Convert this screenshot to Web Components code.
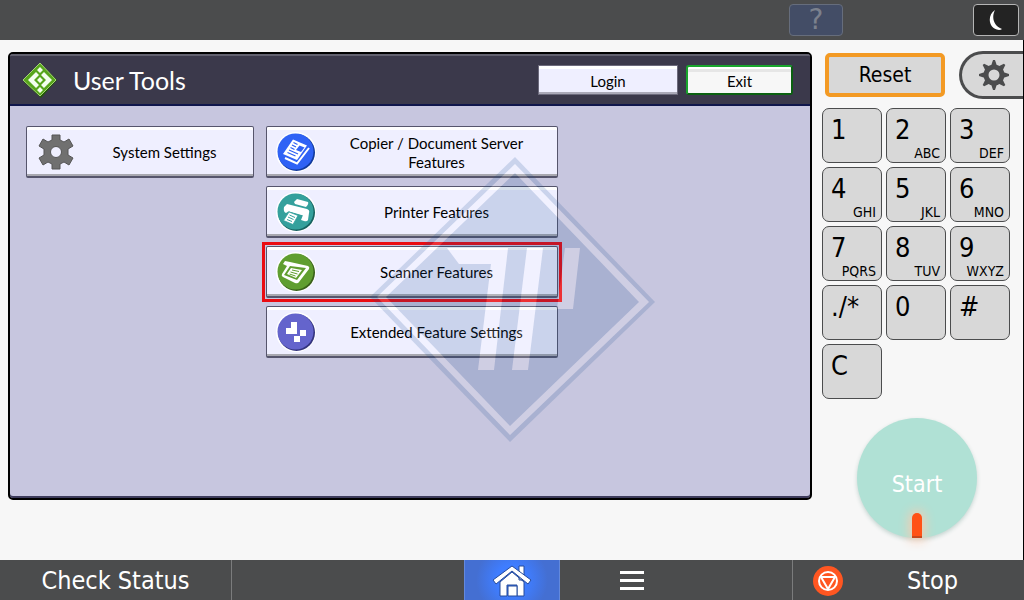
<!DOCTYPE html>
<html lang="en">
<head>
<meta charset="utf-8">
<title>User Tools</title>
<style>
  body {
    margin: 0;
    background: #f7f7f7;
    font-family: "DejaVu Sans Condensed", "DejaVu Sans", sans-serif;
  }
</style>
</head>
<body>
<operation-panel></operation-panel>

<template id="icon-gear">
  <svg viewBox="0 0 36 36" width="36" height="36">
    <path fill="#707070" fill-rule="evenodd" stroke="#555" stroke-width="1" d="M14 1h8v5l4 2 5-3 4 7-5 3v6l5 3-4 7-5-3-4 2v5h-8v-5l-4-2-5 3-4-7 5-3v-6l-5-3 4-7 5 3 4-2zM18 12.500a5.500 5.500 0 1 0 0 11a5.500 5.500 0 1 0 0-11z"/>
  </svg>
</template>
<template id="icon-copier">
  <svg viewBox="0 0 40 40" width="40" height="40">
    <circle cx="20" cy="20" r="20" fill="#fff"/>
    <circle cx="20.500" cy="20.500" r="18.500" fill="#123a9c"/>
    <circle cx="19.500" cy="19.500" r="18" fill="#2f62f5"/>
    <path fill="none" stroke="#fff" stroke-width="2" d="M9 26l12 5.500 12-15.500"/>
    <path fill="#fff" d="M17 7.500l14 6-10 14.500-14-6z"/>
    <path stroke="#2f62f5" stroke-width="1.300" d="M17.500 10.500l4 2M16 13l4 2M14.500 15.500l4 2M13 18l9 4M11.500 20.500l8 3.500"/>
    <path fill="#2f62f5" d="M23.500 13.500l5 2-3.500 4.500-5-2z"/>
  </svg>
</template>
<template id="icon-printer">
  <svg viewBox="0 0 40 40" width="40" height="40">
    <circle cx="20" cy="20" r="20" fill="#fff"/>
    <circle cx="20.500" cy="20.500" r="18.500" fill="#176260"/>
    <circle cx="19.500" cy="19.500" r="18" fill="#34a09c"/>
    <path fill="#fff" d="M18 10l3-3 11 3q1 2-2 5l-11-3z"/>
    <path fill="#fff" d="M8 15l3-3 20 5q3 1 2 4l-1 7q-1 2-4 1l-3-1 2-5-14-4-3 2q-3-1-2-6z"/>
    <path fill="#fff" d="M10 13l20 5-1 6-17-5z"/>
    <path fill="#fff" stroke="#34a09c" stroke-width=".8" d="M13 20l9 3.500-5 9-9.500-4z"/>
    <path stroke="#34a09c" stroke-width="1" d="M13.500 23l5.500 2.500M12 25l5.500 2.500M11 27.500l5 2"/>
  </svg>
</template>
<template id="icon-scanner">
  <svg viewBox="0 0 40 40" width="40" height="40">
    <circle cx="20" cy="20" r="20" fill="#fff"/>
    <circle cx="20.500" cy="20.500" r="18.500" fill="#39601a"/>
    <circle cx="19.500" cy="19.500" r="18" fill="#609e30"/>
    <path fill="#fff" d="M9 9l5 1 18 4q2 1 1 3l-10 13q-1 2-4 1l-12-6q-2-1-1-3l5-8-4-2z"/>
    <path fill="#609e30" d="M14 14l16 2-9 12-13-5z"/>
    <path fill="#fff" d="M15 16l11 2-6 8-9-4z"/>
    <path stroke="#609e30" stroke-width="1" d="M16 18l7 1.500M14.500 20l7 2M13.500 22l6 2"/>
  </svg>
</template>
<template id="icon-extended">
  <svg viewBox="0 0 40 40" width="40" height="40">
    <circle cx="20" cy="20" r="20" fill="#fff"/>
    <circle cx="20.500" cy="20.500" r="18.500" fill="#34347e"/>
    <circle cx="19.500" cy="19.500" r="18" fill="#6464cc"/>
    <path fill="#fff" d="M15 10h6v12H10v-6h5zM24 18h6v6h-6zM18 24h6v6h-6z"/>
  </svg>
</template>

<script>
  // Base for every part: puts the markup and styles in an open shadow root
  class PanelPart extends HTMLElement {
    constructor() {
      super();
      this.attachShadow({ mode: 'open' });
    }

    connectedCallback() {
      this.shadowRoot.innerHTML = `
        <style>
          * {
            box-sizing: border-box;
          }

          button {
            color: inherit;
            cursor: pointer;
            font-family: inherit;
            margin: 0;
            padding: 0;
          }

          svg {
            display: block;
            flex: none;
          }
          ${this.styles()}
        </style>
        ${this.markup()}
      `;
    }
  }

  // The whole screen
  class OperationPanel extends PanelPart {
    styles() {
      return `
        :host {
          display: flex;
          flex-direction: column;
          min-height: 100vh;
        }

        main {
          border-right: 1px solid black;
          display: grid;
          flex: 1;
          gap: 10px;
          grid-template-columns: 1fr 201px;
          padding: 12px 0 0 8px;
        }

        user-tools {
          margin-bottom: 60px;
        }
      `;
    }

    markup() {
      return `
        <status-bar></status-bar>
        <main>
          <user-tools></user-tools>
          <hard-keys></hard-keys>
        </main>
        <task-bar></task-bar>
      `;
    }
  }
  customElements.define('operation-panel', OperationPanel);

  // Dark strip at the top with help and sleep
  class StatusBar extends PanelPart {
    styles() {
      return `
        :host {
          align-items: center;
          background: #4b4c4d;
          display: flex;
          gap: 130px;
          height: 40px;
          justify-content: flex-end;
          padding-right: 5px;
        }

        button {
          border-radius: 4px;
          display: grid;
          height: 32px;
          place-items: center;
        }

        .help {
          background: #434d66;
          border: 1px solid #666d7c;
          color: #7c818d;
          font: 28px/30px "DejaVu Sans", sans-serif;
          width: 54px;
        }

        .sleep {
          background: #232323;
          border: 1px solid #b5b5b5;
          width: 46px;
        }
      `;
    }

    markup() {
      return `
        <button class="help">?</button>
        <button class="sleep" aria-label="Sleep">
          <svg viewBox="0 0 14 22" width="14" height="22"><path fill="#fff" d="M6 1C-2 6-1 20 10 21q2 0 3-1C5 17 2 9 6 1z"/></svg>
        </button>
      `;
    }
  }
  customElements.define('status-bar', StatusBar);

  // Window with the title bar and the settings buttons
  class UserTools extends PanelPart {
    styles() {
      return `
        :host {
          background: #c7c6df;
          border: 2px solid black;
          border-radius: 5px;
          box-shadow: inset 0 -2px #3d3b5c;
          display: block;
          font-family: Lato, sans-serif;
          overflow: hidden;
          position: relative;
        }

        header {
          align-items: center;
          background: #3b394b;
          border-bottom: 2px solid #10164c;
          border-top: 2px solid #62616f;
          display: flex;
          gap: 8px;
          height: 52px;
          padding: 0 17px 0 12px;
        }

        h1 {
          color: white;
          flex: 1;
          font-size: 25px;
          font-weight: normal;
          line-height: 32px;
          margin: 0 0 0 7px;
        }

        header button {
          color: black;
          font-size: 15px;
          height: 30px;
          line-height: 24px;
          padding-top: 2px;
        }

        .login {
          background: #efefff;
          border: 1px solid #6c6a7c;
          box-shadow: inset 0 3px white, inset 0 -2px #aaa9b8;
          width: 140px;
        }

        .exit {
          background: #f7f7f7;
          border: 2px solid #18a52c;
          border-bottom-color: #0a6010;
          border-radius: 3px;
          border-right-color: #0a6010;
          box-shadow: inset 0 2px white, inset 0 5px #e6e6e6;
          width: 107px;
        }

        .features {
          align-items: start;
          display: grid;
          gap: 12px;
          grid-template-columns: 228fr 292fr 224fr;
          padding: 20px 16px;
        }

        .stack {
          display: grid;
          gap: 8px;
        }

        .watermark {
          left: 360px;
          pointer-events: none;
          position: absolute;
          top: 103px;
        }
      `;
    }

    markup() {
      return `
        <header>
          <svg viewBox="0 0 36 36" width="36" height="36">
            <path fill="#235a08" d="M19 2l16 16-16 18L2 20z"/>
            <path fill="#57a51c" stroke="#a5d576" stroke-width="1" stroke-linejoin="round" d="M18 1l16 17-16 16L1 18z"/>
            <path fill="#f4fff0" d="M18 5l3 3-3 3-3-3zM18 25l3 3-3 3-3-3zM18 15l3 3-3 3-3-3zM14 10l3 3-5 5 5 5-3 3-8-8zM22 10l-3 3 5 5-5 5 3 3 8-8z"/>
          </svg>
          <h1>User Tools</h1>
          <button class="login">Login</button>
          <button class="exit">Exit</button>
        </header>
        <div class="features">
          <feature-button icon="gear">System Settings</feature-button>
          <div class="stack">
            <feature-button icon="copier">Copier / Document Server Features</feature-button>
            <feature-button icon="printer">Printer Features</feature-button>
            <feature-button icon="scanner" marked>Scanner Features</feature-button>
            <feature-button icon="extended">Extended Feature Settings</feature-button>
          </div>
        </div>
        <svg class="watermark" viewBox="370 157 286 286" width="286" height="286" aria-hidden="true">
          <path fill="#194b91" fill-opacity=".17" fill-rule="evenodd" d="M515 157L655 302 510 442 370 297zM515 164L377 297 510 435 649 302zM515 173L639 302 510 426 386 297zM447 248H508L494 370H478L491 264H459zM527 248H543L528 370H512zM565 248H580L573 309H557z"/>
          <path fill="#fff" fill-opacity=".15" fill-rule="evenodd" d="M515 164L377 297 510 435 649 302zM515 173L639 302 510 426 386 297zM447 248H508L494 370H478L491 264H459zM527 248H543L528 370H512zM565 248H580L573 309H557z"/>
        </svg>
      `;
    }
  }
  customElements.define('user-tools', UserTools);

  // One settings button, icon on the left and the slotted label centred
  class FeatureButton extends PanelPart {
    styles() {
      return `
        :host {
          display: block;
        }

        button {
          align-items: center;
          background: #efefff;
          border: 1px solid #56556c;
          border-bottom-width: 2px;
          border-radius: 2px;
          box-shadow: inset 0 3px white, inset 0 -2px #a8a8b0;
          color: black;
          display: grid;
          font-size: 15px;
          grid-template-columns: 40px 1fr;
          height: 52px;
          line-height: 19px;
          padding: 0 8px 0 9px;
          width: 100%;
        }

        svg {
          justify-self: center;
        }

        span {
          padding: 2px 16px 0 24px;
        }

        :host([marked]) {
          outline: 3px solid #ea0c12;
          outline-offset: 1px;
        }
      `;
    }

    markup() {
      const icon = document.getElementById('icon-' + this.getAttribute('icon'));
      return `<button>${icon.innerHTML}<span><slot></slot></span></button>`;
    }
  }
  customElements.define('feature-button', FeatureButton);

  // Right column: reset, settings, number keys and start
  class HardKeys extends PanelPart {
    styles() {
      return `
        :host {
          display: flex;
          flex-direction: column;
        }

        .top {
          align-items: center;
          display: flex;
          height: 46px;
          justify-content: space-between;
          padding-left: 3px;
        }

        .reset {
          background: #d8d8d8;
          border: 4px solid #f39a24;
          border-radius: 5px;
          color: black;
          font-size: 21px;
          height: 44px;
          width: 120px;
        }

        .settings {
          background: #d8d8d8;
          border: 3px solid #4b4c4d;
          border-radius: 24px 0 0 24px;
          border-right: 0;
          display: grid;
          height: 48px;
          padding-left: 17px;
          place-items: center start;
          width: 64px;
        }

        .keys {
          display: grid;
          gap: 4px;
          grid-template-columns: repeat(3, 60px);
          padding-top: 10px;
        }

        .start {
          background: #b0e1d5;
          border: 0;
          border-radius: 50%;
          box-shadow: 0 2px 4px #c4d4d0;
          color: white;
          display: flex;
          flex-direction: column;
          align-items: center;
          font-size: 23px;
          height: 120px;
          justify-content: flex-end;
          line-height: 32px;
          margin: 19px 0 0 35px;
          width: 120px;
        }

        .lamp {
          background: #ff5216;
          border-bottom: 2px solid #c8481c;
          border-radius: 5px 5px 0 0;
          box-shadow: 0 0 12px 2px #ffc9ac;
          height: 25px;
          margin-top: 13px;
          width: 10px;
        }
      `;
    }

    markup() {
      const keys = [
        ['1', ''], ['2', 'ABC'], ['3', 'DEF'],
        ['4', 'GHI'], ['5', 'JKL'], ['6', 'MNO'],
        ['7', 'PQRS'], ['8', 'TUV'], ['9', 'WXYZ'],
        ['./*', ''], ['0', ''], ['#', ''], ['C', '']
      ];
      // Gear with eight teeth
      const teeth = [0, 45, 90, 135, 180, 225, 270, 315]
        .map((a) => `<path d="M12 6l2-6h2l2 6z" transform="rotate(${a} 15 15)"/>`).join('');
      return `
        <div class="top">
          <button class="reset">Reset</button>
          <button class="settings" aria-label="Settings">
            <svg viewBox="0 0 30 30" width="30" height="30" fill="#4b4c4d">
              ${teeth}
              <circle cx="15" cy="15" r="8" fill="none" stroke="#4b4c4d" stroke-width="5"/>
            </svg>
          </button>
        </div>
        <div class="keys">
          ${keys.map(([digit, letters]) => `<number-key letters="${letters}">${digit}</number-key>`).join('')}
        </div>
        <button class="start">Start<span class="lamp"></span></button>
      `;
    }
  }
  customElements.define('hard-keys', HardKeys);

  class NumberKey extends PanelPart {
    styles() {
      return `
        :host {
          display: block;
        }

        button {
          background: #d8d8d8;
          border: 1px solid #4b4c4d;
          border-radius: 7px;
          color: black;
          display: flex;
          flex-direction: column;
          font-size: 27px;
          height: 55px;
          line-height: 30px;
          padding: 6px 5px 0 8px;
          text-align: left;
          width: 100%;
        }

        small {
          align-self: flex-end;
          font-size: 14px;
          line-height: 17px;
        }
      `;
    }

    markup() {
      return `
        <button>
          <slot></slot>
          <small>${this.getAttribute('letters')}</small>
        </button>
      `;
    }
  }
  customElements.define('number-key', NumberKey);

  // Dark strip at the bottom
  class TaskBar extends PanelPart {
    styles() {
      return `
        :host {
          background: #4b4c4d;
          color: white;
          display: grid;
          grid-template-columns: 232fr 232fr 96fr 232fr 232fr;
          height: 40px;
        }

        button {
          align-items: center;
          background: none;
          border: 0;
          display: flex;
          font-size: 25px;
          justify-content: center;
          line-height: 36px;
          padding-top: 2px;
        }

        .status {
          border-right: 1px solid #7b7c7d;
        }

        .home {
          background: radial-gradient(circle, #3f7dff 30%, #446fd2 70%);
          border: solid #6389dd;
          border-width: 0 1px;
          grid-column: 3;
        }

        .menu {
          justify-content: flex-start;
          padding-left: 60px;
        }

        .stop {
          border-left: 1px solid #7b7c7d;
          gap: 64px;
          justify-content: flex-start;
          padding-left: 20px;
        }
      `;
    }

    markup() {
      return `
        <button class="status">Check Status</button>
        <button class="home" aria-label="Home">
          <svg viewBox="0 0 40 32" width="40" height="32">
            <g fill="#fff" stroke="#254a9b" stroke-width="1">
              <path d="M27 1h5v14h-5zM8 17L20 7l12 10v14h-7V20h-10v11H8z"/>
              <path d="M20 1L1 15l3 4L20 6l16 13 3-4z"/>
              <path d="M16 21h9v10h-9z"/>
            </g>
          </svg>
        </button>
        <button class="menu" aria-label="Menu">
          <svg viewBox="0 0 24 20" width="24" height="20" fill="#fff"><path d="M0 0h24v3H0zM0 8h24v3H0zM0 16h24v3H0z"/></svg>
        </button>
        <button class="stop">
          <svg viewBox="0 0 30 30" width="30" height="30">
            <circle cx="15" cy="15" r="15" fill="#ff5621"/>
            <g fill="none" stroke="#fff" stroke-width="2">
              <circle cx="15" cy="15" r="9"/>
              <path stroke-linejoin="round" d="M8 11h14l-7 12z"/>
            </g>
          </svg>
          Stop
        </button>
      `;
    }
  }
  customElements.define('task-bar', TaskBar);
</script>
</body>
</html>
